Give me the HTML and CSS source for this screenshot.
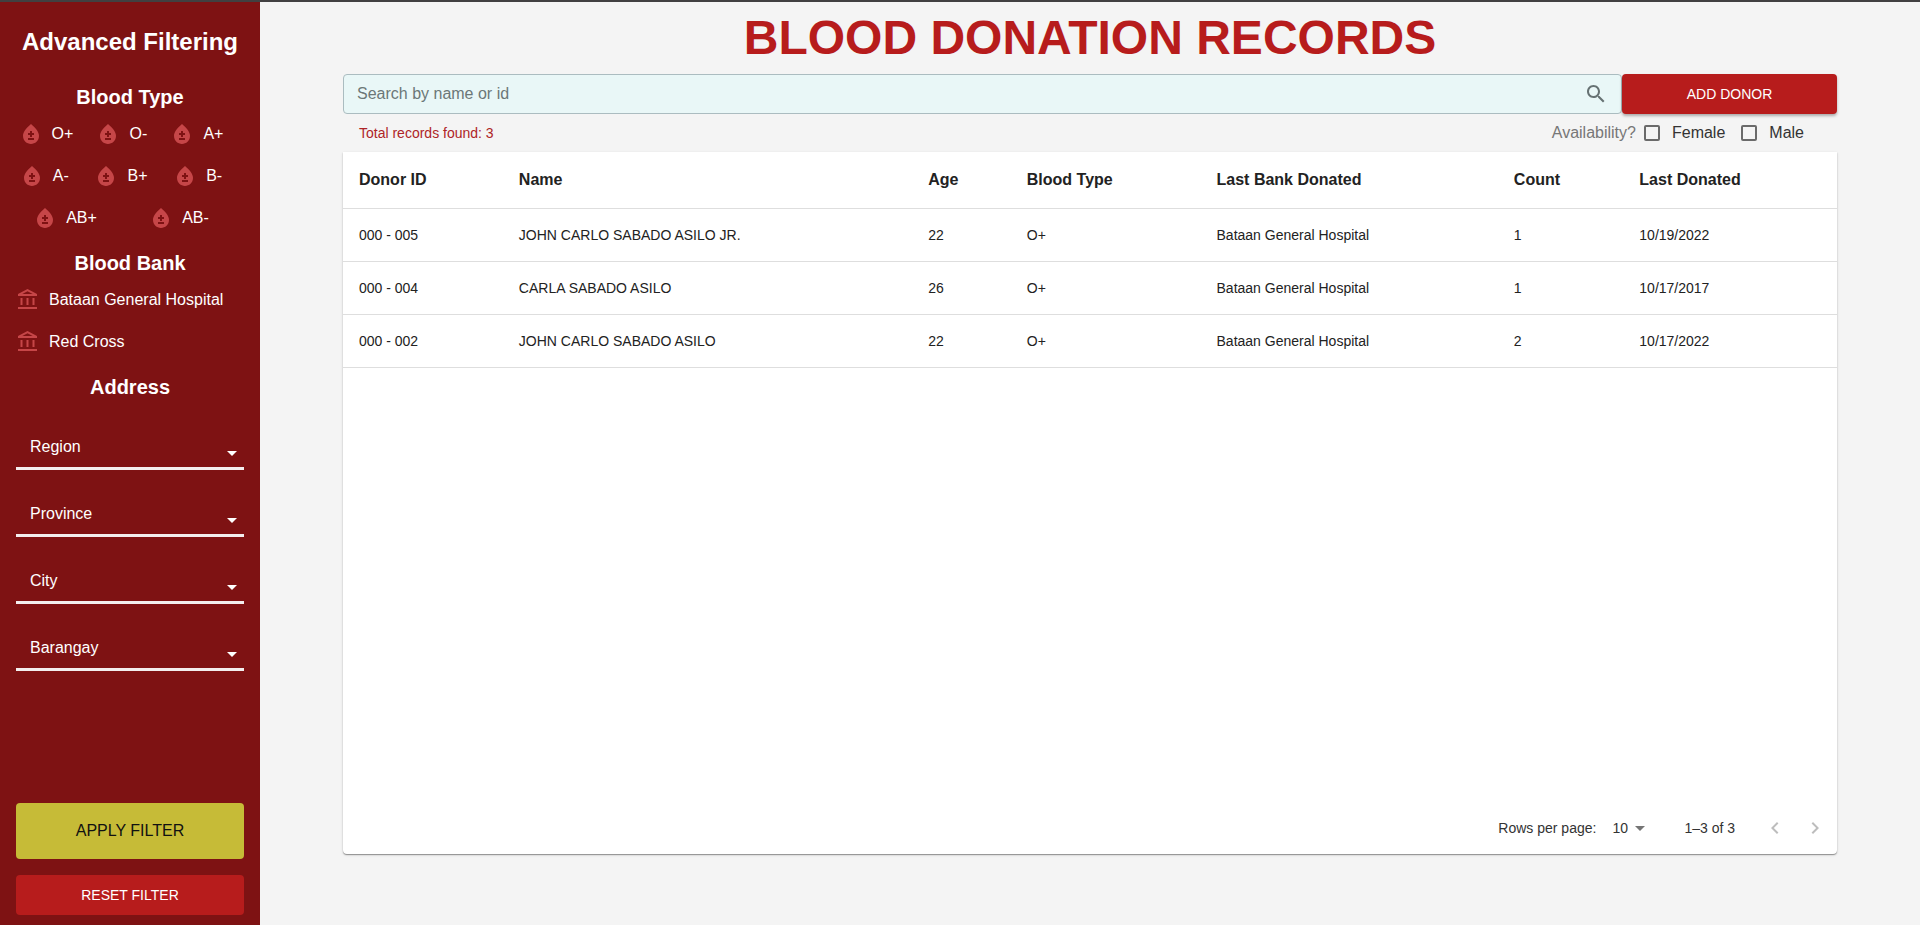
FILE: index.html
```html
<!DOCTYPE html>
<html lang="en">
<head>
<meta charset="utf-8">
<title>Blood Donation Records</title>
<link rel="stylesheet" href="styles.css">
</head>
<body>
<svg class="defs" aria-hidden="true">
  <symbol id="drop" viewBox="0 0 24 24"><path d="M12 2c-5.33 4.55-8 8.48-8 11.8 0 4.98 3.8 8.2 8 8.2s8-3.22 8-8.2c0-3.32-2.67-7.25-8-11.8zm3 16H9v-2h6v2zm0-5h-2v2h-2v-2H9v-2h2V9h2v2h2v2z"/></symbol>
  <symbol id="bank" viewBox="0 0 24 24"><path d="M6.5 10h-2v7h2v-7zm6 0h-2v7h2v-7zm8.5 9H2v2h19v-2zm-2.5-9h-2v7h2v-7zm-7-6.74L16.71 6H6.29l5.21-2.74m0-2.26L2 6v2h19V6l-9.5-5z"/></symbol>
  <symbol id="caret" viewBox="0 0 24 24"><path d="M7 10l5 5 5-5z"/></symbol>
</svg>
<div class="app">
  <aside class="sidebar">
    <h2 class="sidebar-title">Advanced Filtering</h2>

    <h3 class="section-title">Blood Type</h3>
    <div class="type-row">
      <label class="pick"><span class="pick-icon"><input type="checkbox"><svg><use href="#drop"/></svg></span>O+</label>
      <label class="pick"><span class="pick-icon"><input type="checkbox"><svg><use href="#drop"/></svg></span>O-</label>
      <label class="pick"><span class="pick-icon"><input type="checkbox"><svg><use href="#drop"/></svg></span>A+</label>
    </div>
    <div class="type-row">
      <label class="pick"><span class="pick-icon"><input type="checkbox"><svg><use href="#drop"/></svg></span>A-</label>
      <label class="pick"><span class="pick-icon"><input type="checkbox"><svg><use href="#drop"/></svg></span>B+</label>
      <label class="pick"><span class="pick-icon"><input type="checkbox"><svg><use href="#drop"/></svg></span>B-</label>
    </div>
    <div class="type-row">
      <label class="pick"><span class="pick-icon"><input type="checkbox"><svg><use href="#drop"/></svg></span>AB+</label>
      <label class="pick"><span class="pick-icon"><input type="checkbox"><svg><use href="#drop"/></svg></span>AB-</label>
    </div>

    <h3 class="section-title">Blood Bank</h3>
    <div class="bank-list">
      <label class="pick"><span class="pick-icon"><input type="checkbox"><svg><use href="#bank"/></svg></span>Bataan General Hospital</label>
      <label class="pick"><span class="pick-icon"><input type="checkbox"><svg><use href="#bank"/></svg></span>Red Cross</label>
    </div>

    <h3 class="section-title">Address</h3>
    <div class="address">
      <div class="field"><select aria-label="Region"><option>Region</option></select><svg><use href="#caret"/></svg></div>
      <div class="field"><select aria-label="Province"><option>Province</option></select><svg><use href="#caret"/></svg></div>
      <div class="field"><select aria-label="City"><option>City</option></select><svg><use href="#caret"/></svg></div>
      <div class="field"><select aria-label="Barangay"><option>Barangay</option></select><svg><use href="#caret"/></svg></div>
    </div>

    <div class="sidebar-actions">
      <button class="btn btn-apply" type="button">APPLY FILTER</button>
      <button class="btn btn-red" type="button">RESET FILTER</button>
    </div>
  </aside>

  <main class="main">
    <h1 class="title">BLOOD DONATION RECORDS</h1>
    <div class="toolbar">
      <div class="search">
        <input type="text" placeholder="Search by name or id" aria-label="Search by name or id">
        <svg viewBox="0 0 24 24"><path d="M15.5 14h-.79l-.28-.27C15.41 12.59 16 11.11 16 9.5 16 5.91 13.09 3 9.5 3S3 5.91 3 9.5 5.91 16 9.5 16c1.61 0 3.09-.59 4.23-1.57l.27.28v.79l5 4.99L20.49 19l-4.99-5zm-6 0C7.01 14 5 11.99 5 9.5S7.01 5 9.5 5 14 7.01 14 9.5 11.99 14 9.5 14z"/></svg>
      </div>
      <button class="btn btn-red btn-add" type="button">ADD DONOR</button>
    </div>
    <div class="summary">
      <span class="total">Total records found: 3</span>
      <div class="availability">
        <span class="availability-label">Availability?</span>
        <label class="check"><input type="checkbox">Female</label>
        <label class="check"><input type="checkbox">Male</label>
      </div>
    </div>
    <section class="card">
      <table class="records">
        <colgroup>
          <col class="c-id"><col class="c-name"><col class="c-age"><col class="c-type"><col class="c-bank"><col class="c-count"><col class="c-date">
        </colgroup>
        <thead>
          <tr><th>Donor ID</th><th>Name</th><th>Age</th><th>Blood Type</th><th>Last Bank Donated</th><th>Count</th><th>Last Donated</th></tr>
        </thead>
        <tbody>
          <tr><td>000 - 005</td><td>JOHN CARLO SABADO ASILO JR.</td><td>22</td><td>O+</td><td>Bataan General Hospital</td><td>1</td><td>10/19/2022</td></tr>
          <tr><td>000 - 004</td><td>CARLA SABADO ASILO</td><td>26</td><td>O+</td><td>Bataan General Hospital</td><td>1</td><td>10/17/2017</td></tr>
          <tr><td>000 - 002</td><td>JOHN CARLO SABADO ASILO</td><td>22</td><td>O+</td><td>Bataan General Hospital</td><td>2</td><td>10/17/2022</td></tr>
        </tbody>
      </table>
      <div class="pagination">
        <label for="rows">Rows per page:</label>
        <div class="rows-select"><select id="rows"><option>10</option></select><svg><use href="#caret"/></svg></div>
        <span class="range">1–3 of 3</span>
        <button class="page-btn" type="button" aria-label="Previous page" disabled><svg viewBox="0 0 24 24"><path d="M15.41 7.41 14 6l-6 6 6 6 1.41-1.41L10.83 12z"/></svg></button>
        <button class="page-btn" type="button" aria-label="Next page" disabled><svg viewBox="0 0 24 24"><path d="M10 6 8.59 7.41 13.17 12l-4.58 4.59L10 18l6-6z"/></svg></button>
      </div>
    </section>
  </main>
</div>
</body>
</html>
```
FILE: styles.css
```css
* {
  box-sizing: border-box;
}

body {
  margin: 0;
  background: #f4f4f4;
  color: #222;
  font-family: "Liberation Sans", Arial, sans-serif;
  font-size: 16px;
}

h1, h2, h3 {
  margin: 0;
}

button, input, select {
  font: inherit;
  margin: 0;
}

svg {
  display: block;
  width: 24px;
  height: 24px;
  flex: none;
  fill: currentColor;
}

.defs {
  display: none;
}

.app {
  display: flex;
  min-height: 100vh;
  border-top: 2px solid #414041;
}

/* Sidebar */

.sidebar {
  display: flex;
  flex-direction: column;
  flex: none;
  width: 260px;
  padding: 24px 16px 10px;
  background: #7e1213;
  color: #fff;
}

.sidebar-title {
  margin-bottom: 15px;
  font-size: 24px;
  line-height: 32px;
  text-align: center;
  white-space: nowrap;
}

.section-title {
  margin-top: 8px;
  font-size: 20px;
  line-height: 32px;
  text-align: center;
}

.type-row {
  display: flex;
  justify-content: space-around;
}

.pick {
  display: flex;
  align-items: center;
  height: 42px;
  white-space: nowrap;
}

.type-row .pick {
  margin: 0 16px 0 -11px;
}

.pick-icon {
  position: relative;
  padding: 9px;
  color: #c64648;
}

.pick-icon input {
  position: absolute;
  inset: 0;
  width: 100%;
  height: 100%;
  opacity: 0;
}

.bank-list {
  margin-left: -9px;
}

.address {
  display: grid;
  gap: 24px;
  padding-top: 24px;
}

.field {
  display: flex;
  align-items: flex-end;
  height: 43px;
  border-bottom: 3px solid #f3eeee;
}

.field select {
  flex: 1;
  height: 40px;
  margin-right: -24px;
  padding: 0 38px 2px 14px;
  border: 0;
  background: transparent;
  color: #fff;
  appearance: none;
}

.field svg {
  margin-bottom: 2px;
  pointer-events: none;
}

.sidebar-actions {
  display: grid;
  gap: 16px;
  margin-top: auto;
}

.btn {
  height: 40px;
  padding: 0 16px;
  border: 0;
  border-radius: 4px;
  font-size: 14px;
}

.btn-apply {
  height: 56px;
  background: #c6bb37;
  color: #111;
  font-size: 16px;
}

.btn-red {
  background: #b71c1c;
  color: #fff;
}

/* Records */

.main {
  display: flex;
  flex-direction: column;
  flex: 1;
  min-width: 0;
  padding: 8px calc((100vw - 260px) / 20) 71px;
}

.title {
  margin-bottom: 8px;
  color: #b71c1c;
  font-size: 48px;
  line-height: 56px;
  text-align: center;
}

.toolbar {
  display: flex;
}

.search {
  display: flex;
  align-items: center;
  flex: 1;
  height: 40px;
  padding: 0 13px;
  border: 1px solid #abbcc0;
  border-radius: 4px;
  background: #e9f7f7;
  color: #667273;
}

.search input {
  flex: 1;
  min-width: 0;
  height: 100%;
  padding: 0;
  border: 0;
  outline: 0;
  background: transparent;
  color: #222;
}

.search input::placeholder {
  color: #6c7778;
  opacity: 1;
}

.btn-add {
  flex: none;
  width: 215px;
  box-shadow: 0 2px 3px rgba(0, 0, 0, 0.3);
}

.summary {
  display: flex;
  align-items: center;
  justify-content: space-between;
  height: 38px;
  padding: 0 33px 0 16px;
}

.total {
  color: #ae2427;
  font-size: 14px;
}

.availability {
  display: flex;
  align-items: center;
}

.availability-label {
  color: #777;
}

.check {
  display: flex;
  align-items: center;
  gap: 12px;
  margin-left: 16px;
  color: #333;
}

.availability-label + .check {
  margin-left: 8px;
}

.check input {
  width: 16px;
  height: 16px;
  border: 2px solid #6a6a6a;
  border-radius: 2px;
  appearance: none;
}

.check input:checked {
  background: #b71c1c;
}

.card {
  display: flex;
  flex-direction: column;
  justify-content: space-between;
  flex: 1;
  border-radius: 0 0 4px 4px;
  background: #fff;
  box-shadow: 0 1px 1px rgba(0, 0, 0, 0.35), 0 1px 3px rgba(0, 0, 0, 0.14);
}

.records {
  width: 100%;
  border-collapse: separate;
  border-spacing: 0;
  table-layout: fixed;
}

.c-id { width: 10.7%; }
.c-name { width: 27.4%; }
.c-age { width: 6.6%; }
.c-type { width: 12.7%; }
.c-bank { width: 19.9%; }
.c-count { width: 8.4%; }
.c-date { width: 14.3%; }

.records th,
.records td {
  height: 53px;
  padding: 0 16px;
  border-bottom: 1px solid #dedede;
  font-size: 14px;
  text-align: left;
}

.records th {
  height: 57px;
  font-size: 16px;
}

.pagination {
  display: flex;
  align-items: center;
  justify-content: flex-end;
  height: 52px;
  padding-right: 2px;
  color: #333;
  font-size: 14px;
}

.rows-select {
  display: flex;
  align-items: center;
  margin: 0 32px 0 8px;
}

.rows-select select {
  width: 48px;
  height: 24px;
  margin-right: -24px;
  padding: 0 24px 0 8px;
  border: 0;
  background: transparent;
  color: inherit;
  appearance: none;
}

.rows-select svg {
  color: #757575;
  pointer-events: none;
}

.range {
  margin-right: 20px;
}

.page-btn {
  padding: 8px;
  border: 0;
  background: transparent;
  color: #bdbdbd;
}
```
